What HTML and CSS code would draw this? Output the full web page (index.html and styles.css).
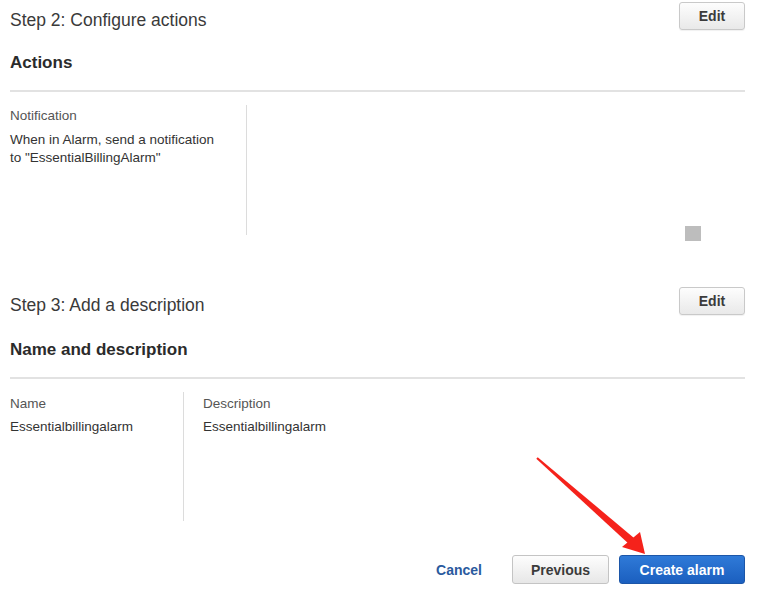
FILE: index.html
```html
<!DOCTYPE html>
<html>
<head>
<meta charset="utf-8">
<link rel="stylesheet" href="styles.css">
</head>
<body>
<div class="page">
  <section class="step step-actions">
    <div class="step-header">
      <h2 class="step-title">Step 2: Configure actions</h2>
      <button class="btn btn-edit">Edit</button>
    </div>
    <div class="panel-title">Actions</div>
    <div class="panel-body">
      <div class="col col-notify">
        <div class="label">Notification</div>
        <div class="value">When in Alarm, send a notification to "EssentialBillingAlarm"</div>
      </div>
      <div class="col-rest">
        <span class="stray-square"></span>
      </div>
    </div>
  </section>

  <section class="step step-desc">
    <div class="step-header">
      <h2 class="step-title">Step 3: Add a description</h2>
      <button class="btn btn-edit">Edit</button>
    </div>
    <div class="panel-title title2">Name and description</div>
    <div class="panel-body body2">
      <div class="col col-name">
        <div class="label">Name</div>
        <div class="value">Essentialbillingalarm</div>
      </div>
      <div class="col col-desc">
        <div class="label">Description</div>
        <div class="value">Essentialbillingalarm</div>
      </div>
    </div>
  </section>

  <div class="footer">
    <button class="link-btn">Cancel</button>
    <button class="btn btn-prev">Previous</button>
    <button class="btn btn-primary">Create alarm</button>
  </div>

  <svg class="annotation" width="774" height="596" viewBox="0 0 774 596">
    <polygon fill="#f5221b" points="536.3,458.8 537.7,457.3 634.3,538.2 629.2,544.2"/>
    <polygon fill="#f5221b" points="645,554 622,547 640,532"/>
  </svg>
</div>
</body>
</html>
```

FILE: styles.css
```css
html, body {
  margin: 0;
  padding: 0;
  background: #ffffff;
}

.page {
  position: relative;
  width: 774px;
  height: 596px;
  box-sizing: border-box;
  padding: 0 29px 0 10px;
  font-family: "Liberation Sans", Arial, sans-serif;
  color: #333;
  overflow: hidden;
}

.step-header {
  display: flex;
  justify-content: space-between;
  align-items: flex-start;
}

.step-title {
  margin: 10px 0 0 0;
  font-size: 17.5px;
  line-height: 20px;
  font-weight: normal;
  color: #3a3a3a;
}

.btn {
  font-family: "Liberation Sans", Arial, sans-serif;
  font-weight: bold;
  font-size: 14px;
  border-radius: 3px;
  padding: 0;
  cursor: pointer;
}

.btn-edit {
  margin-top: 2px;
  width: 66px;
  height: 28px;
  color: #3b3b3b;
  border: 1px solid #c9c9c9;
  background: linear-gradient(#fdfdfd, #e9e9e9);
  box-shadow: 0 1px 1px rgba(0,0,0,0.06);
}

.panel-title {
  margin-top: 23px;
  font-size: 17px;
  line-height: 20px;
  font-weight: bold;
  color: #2b2b2b;
  padding-bottom: 17px;
  border-bottom: 2px solid #e2e2e2;
}

.title2 {
  margin-top: 25px;
}

.panel-body {
  display: flex;
  margin-top: 13px;
  height: 130px;
}

.body2 {
  height: 129px;
}

.col {
  box-sizing: border-box;
  font-size: 13.5px;
  padding-top: 2px;
}

.col-notify {
  width: 237px;
  padding-right: 25px;
  border-right: 1px solid #dcdcdc;
  line-height: 18.5px;
}

.col-rest {
  flex: 1;
  display: flex;
  justify-content: flex-end;
  align-items: flex-end;
}

.stray-square {
  display: block;
  width: 16px;
  height: 15px;
  background: #bdbdbd;
  margin-right: 44px;
  margin-bottom: -6px;
}

.label {
  color: #555;
  margin-bottom: 5px;
}

.col-name {
  width: 174px;
  border-right: 1px solid #dcdcdc;
  line-height: 19px;
}

.col-desc {
  padding-left: 19px;
  line-height: 19px;
}

.col-name .label,
.col-desc .label {
  margin-bottom: 4px;
}

.value {
  color: #333;
}

.step-desc {
  margin-top: 50px;
}

.footer {
  margin-top: 34px;
  display: flex;
  justify-content: flex-end;
  align-items: center;
}

.link-btn {
  background: none;
  border: none;
  padding: 0;
  margin-right: 30px;
  font-family: "Liberation Sans", Arial, sans-serif;
  font-weight: bold;
  font-size: 14px;
  color: #2a5a9e;
  cursor: pointer;
}

.btn-prev {
  width: 97px;
  height: 29px;
  margin-right: 10px;
  color: #3b3b3b;
  border: 1px solid #c4c4c4;
  background: linear-gradient(#fdfdfd, #e7e7e7);
}

.btn-primary {
  width: 126px;
  height: 29px;
  color: #ffffff;
  border: 1px solid #1c56a8;
  background: linear-gradient(#2f7ad8, #1b5fbf);
}

.annotation {
  position: absolute;
  left: 0;
  top: 0;
  pointer-events: none;
}
```
